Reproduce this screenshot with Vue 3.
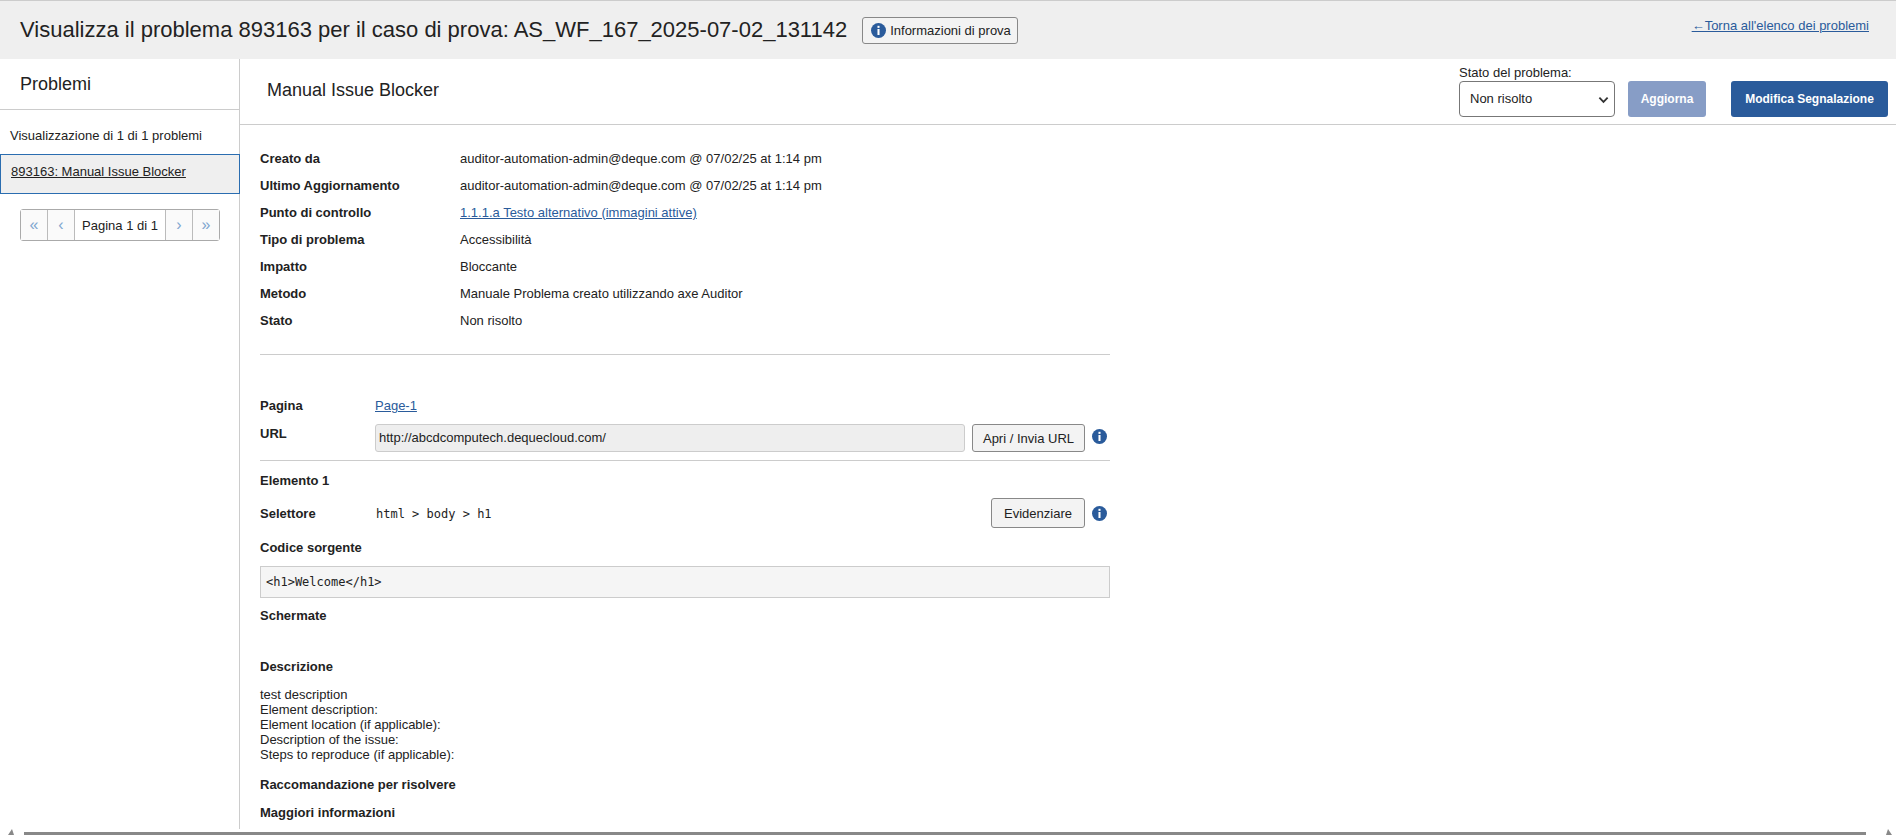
<script setup>
const fields = [
  ['Creato da', 'auditor-automation-admin@deque.com @ 07/02/25 at 1:14 pm'],
  ['Ultimo Aggiornamento', 'auditor-automation-admin@deque.com @ 07/02/25 at 1:14 pm'],
  ['Punto di controllo', '1.1.1.a Testo alternativo (immagini attive)', true],
  ['Tipo di problema', 'Accessibilità'],
  ['Impatto', 'Bloccante'],
  ['Metodo', 'Manuale Problema creato utilizzando axe Auditor'],
  ['Stato', 'Non risolto'],
]
const desc = ['test description', 'Element description:', 'Element location (if applicable):', 'Description of the issue:', 'Steps to reproduce (if applicable):']
</script>

<template>
  <div class="page">
    <header class="top">
      <h1>Visualizza il problema 893163 per il caso di prova: AS_WF_167_2025-07-02_131142</h1>
      <button class="info-btn">
        <svg class="ico" viewBox="0 0 16 16"><circle cx="8" cy="8" r="8" fill="#2a5b9b"/><rect x="6.9" y="3" width="2.2" height="2.2" fill="#fff"/><rect x="6.9" y="6.4" width="2.2" height="6.4" fill="#fff"/></svg>
        Informazioni di prova
      </button>
      <a class="back" href="#">←Torna all'elenco dei problemi</a>
    </header>

    <div class="body">
      <aside class="side">
        <h2>Problemi</h2>
        <p class="count">Visualizzazione di 1 di 1 problemi</p>
        <div class="item"><a href="#">893163: Manual Issue Blocker</a></div>
        <div class="pager">
          <span class="pg">«</span><span class="pg">‹</span><span class="pg cur">Pagina 1 di 1</span><span class="pg">›</span><span class="pg">»</span>
        </div>
      </aside>

      <main class="main">
        <div class="bar">
          <h2>Manual Issue Blocker</h2>
          <div class="status">
            <label>Stato del problema:</label>
            <div class="select">Non risolto
              <svg viewBox="0 0 12 8" class="chev"><path d="M1.5 1.5 6 6l4.5-4.5" fill="none" stroke="#333" stroke-width="2"/></svg>
            </div>
          </div>
          <button class="primary off">Aggiorna</button>
          <button class="primary">Modifica Segnalazione</button>
        </div>

        <div class="content">
          <div class="fields">
            <div class="row" v-for="f in fields" :key="f[0]">
              <b>{{ f[0] }}</b>
              <a v-if="f[2]" href="#">{{ f[1] }}</a>
              <span v-else>{{ f[1] }}</span>
            </div>
          </div>
          <hr class="h1" />

          <div class="pagina"><b>Pagina</b><a href="#">Page-1</a></div>
          <div class="url">
            <b>URL</b>
            <div class="input">http://abcdcomputech.dequecloud.com/</div>
            <button class="btn">Apri / Invia URL</button>
            <svg class="ico" viewBox="0 0 16 16"><circle cx="8" cy="8" r="8" fill="#2a5b9b"/><rect x="6.9" y="3" width="2.2" height="2.2" fill="#fff"/><rect x="6.9" y="6.4" width="2.2" height="6.4" fill="#fff"/></svg>
          </div>
          <hr class="h2" />
          <b class="el">Elemento 1</b>
          <div class="sel">
            <b>Selettore</b>
            <code>html &gt; body &gt; h1</code>
            <button class="btn tall">Evidenziare</button>
            <svg class="ico" viewBox="0 0 16 16"><circle cx="8" cy="8" r="8" fill="#2a5b9b"/><rect x="6.9" y="3" width="2.2" height="2.2" fill="#fff"/><rect x="6.9" y="6.4" width="2.2" height="6.4" fill="#fff"/></svg>
          </div>
          <b class="src">Codice sorgente</b>
          <div class="code">&lt;h1&gt;Welcome&lt;/h1&gt;</div>
          <b class="shots">Schermate</b>
          <b class="dsc">Descrizione</b>
          <div class="lines"><div v-for="d in desc" :key="d">{{ d }}</div></div>
          <b class="rec">Raccomandazione per risolvere</b>
          <b class="more">Maggiori informazioni</b>
        </div>
      </main>
    </div>

    <div class="scroll">
      <svg class="arr" viewBox="0 0 6 6"><path d="M4 0 0 6h6z" fill="#888"/></svg>
      <div class="thumb"></div>
      <svg class="arr" viewBox="0 0 6 6"><path d="M2 0 6 6H0z" fill="#888"/></svg>
    </div>
  </div>
</template>

<style>
html, body { margin: 0; background: #fff; overflow: hidden; }
</style>

<style scoped>
.page { width: 1896px; height: 835px; display: flex; flex-direction: column; font-family: "Liberation Sans", Arial, sans-serif; font-size: 13px; color: #222; overflow: hidden; }
a { color: #2a5b9b; }
button { font-family: inherit; cursor: pointer; }
.top { height: 58px; flex: none; background: #efefef; border-top: 1px solid #ccc; display: flex; align-items: center; padding: 0 20px; }
.top h1 { margin: 0; font-size: 22px; font-weight: 400; color: #222; white-space: nowrap; }
.info-btn { margin-left: 15px; height: 27px; width: 156px; padding: 0 0 0 8px; display: flex; align-items: center; gap: 4px; background: #f3f3f3; border: 1px solid #888; border-radius: 3px; font-size: 13px; color: #222; }
.ico { width: 15px; height: 15px; flex: none; }
.back { margin-left: auto; margin-right: 7px; margin-bottom: 10px; font-size: 13px; }
.body { flex: 1; display: flex; min-height: 0; }
.side { width: 239px; flex: none; border-right: 1px solid #ccc; }
.side h2 { margin: 0; height: 51px; box-sizing: border-box; border-bottom: 1px solid #ccc; padding: 13px 20px 0; font-size: 18px; font-weight: 400; line-height: 24px; }
.count { margin: 0; padding: 18px 10px 0; height: 44px; box-sizing: border-box; line-height: 15px; }
.item { height: 40px; box-sizing: border-box; border: 1px solid #2a6db0; background: #efefef; padding: 0 10px; line-height: 34px; margin-right: -1px; }
.item a { color: #222; }
.pager { display: flex; margin: 15px 0 0 20px; width: 200px; height: 32px; box-sizing: border-box; border: 1px solid #aaa; border-radius: 3px; }
.pg { width: 26px; display: flex; align-items: center; justify-content: center; color: #7fa6d0; font-size: 16px; background: #fafafa; border-right: 1px solid #bbb; }
.pg:nth-child(4) { border-left: 1px solid #bbb; }
.pg:nth-child(3) { border-right: 0; }
.pg:last-child { border-right: 0; }
.pg.cur { flex: 1; color: #222; font-size: 13px; background: #fff; }
.main { flex: 1; min-width: 0; }
.bar { height: 66px; box-sizing: border-box; border-bottom: 1px solid #ccc; display: flex; align-items: flex-end; padding: 0 8px 7px 27px; }
.bar h2 { margin: 0 auto 0 0; font-size: 18px; font-weight: 400; align-self: center; padding-top: 5px; }
.status label { display: block; font-size: 13px; line-height: 15px; margin-bottom: 1px; }
.select { position: relative; width: 156px; height: 36px; box-sizing: border-box; border: 1px solid #777; border-radius: 4px; padding-left: 10px; line-height: 34px; font-size: 13px; }
.chev { position: absolute; right: 5px; top: 14px; width: 11px; height: 8px; }
.primary { height: 36px; border: 0; border-radius: 3px; background: #2a5b9b; color: #fff; font-weight: 700; font-size: 12px; padding: 0; width: 157px; margin-left: 25px; }
.primary.off { background: #879dc6; width: 78px; margin-left: 13px; }
.content { width: 850px; margin-left: 20px; display: flex; flex-direction: column; align-items: stretch; }
.content b { font-weight: 700; display: block; line-height: 15px; }
.fields { padding-top: 20px; }
.row { display: flex; height: 27px; align-items: center; }
.row b { width: 200px; }
hr { border: 0; height: 1px; background: #ccc; margin: 0; width: 100%; }
.h1 { margin-top: 20px; }
.pagina { display: flex; margin-top: 43px; line-height: 15px; }
.pagina b { width: 115px; }
.url { display: flex; align-items: center; margin-top: 11px; height: 28px; }
.url b { width: 115px; margin-bottom: 10px; }
.url .ico { margin-bottom: 3px; }
.input { width: 590px; height: 28px; box-sizing: border-box; border: 1px solid #ccc; border-radius: 3px; background: #eee; line-height: 25px; padding-left: 3px; }
.btn { height: 28px; margin-left: 7px; padding: 0; width: 113px; background: #f3f3f3; border: 1px solid #888; border-radius: 3px; font-size: 13px; color: #222; }
.url .ico, .sel .ico { margin-left: 7px; }
.h2 { margin-top: 8px; }
.el { margin-top: 12px; }
.sel { display: flex; align-items: center; margin-top: 10px; height: 30px; padding-right: 3px; }
.sel b { width: 116px; }
.sel code { flex: 1; font-family: "DejaVu Sans Mono", monospace; font-size: 12px; padding-top: 2px; }
.btn.tall { height: 30px; width: 94px; margin-left: 0; }
.src { margin-top: 12px; }
.code { margin-top: 11px; height: 32px; box-sizing: border-box; border: 1px solid #ccc; background: #f5f5f5; font-family: "DejaVu Sans Mono", monospace; font-size: 12px; line-height: 30px; padding-left: 5px; }
.shots { margin-top: 10px; }
.dsc { margin-top: 36px; }
.lines { margin-top: 13px; line-height: 15px; }
.rec { margin-top: 15px; }
.more { margin-top: 13px; }
.scroll { height: 6px; flex: none; display: flex; align-items: flex-end; justify-content: space-between; padding: 0 4px 0 8px; }
.thumb { flex: 1; height: 3px; background: #888; margin: 0 20px 0 10px; }
.arr { width: 6px; height: 6px; }
</style>
